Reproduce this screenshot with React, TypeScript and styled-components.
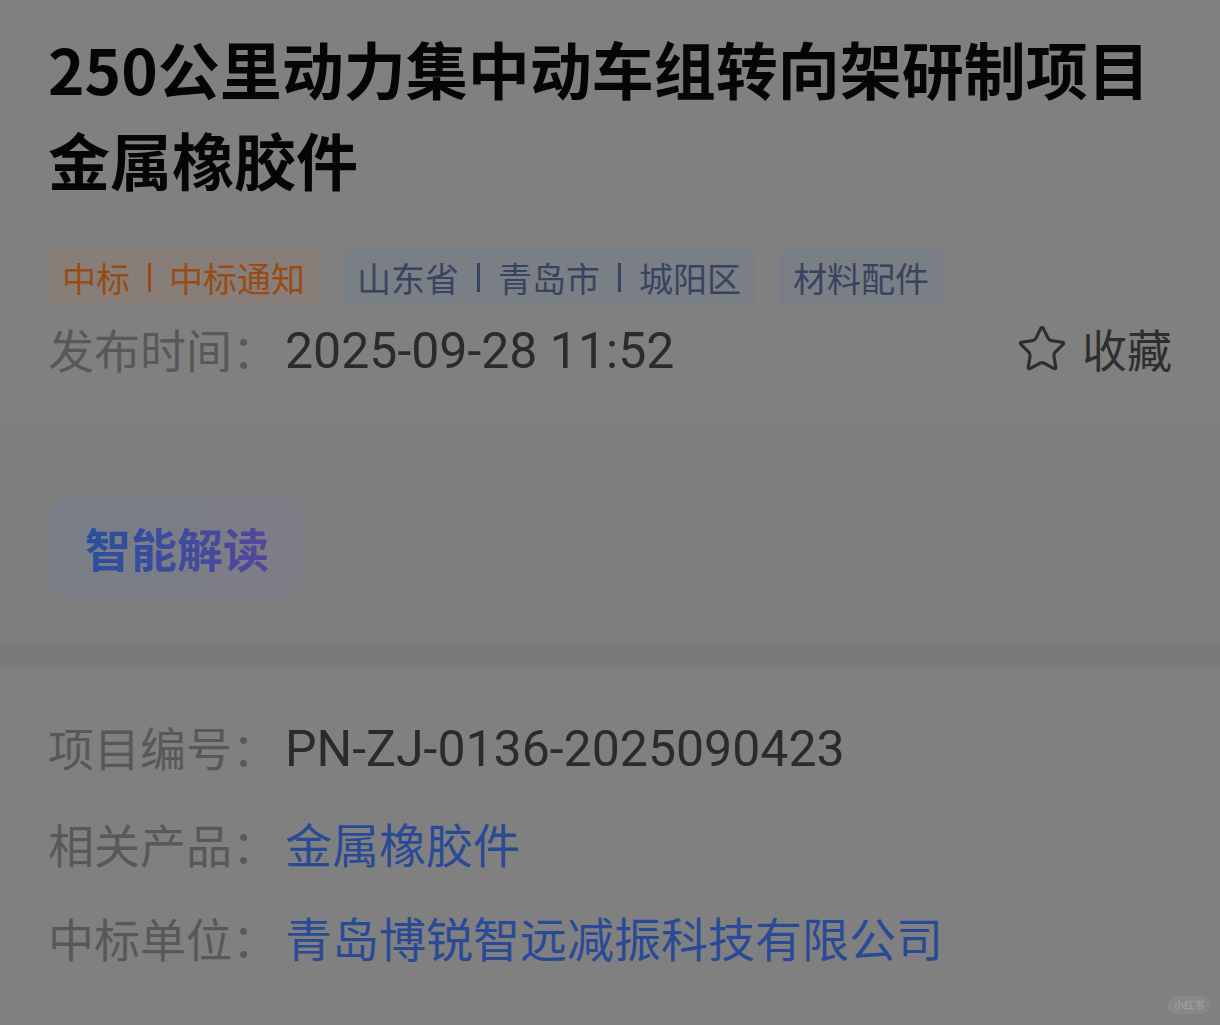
import React from "react";
import styled, { createGlobalStyle } from "styled-components";
import { Star } from "lucide-react";

const GlobalStyle = createGlobalStyle`
  html, body {
    margin: 0;
    padding: 0;
    background: #808080;
  }
  body {
    font-family: "Noto Sans CJK SC", "Noto Sans", sans-serif;
  }
  * { box-sizing: border-box; }
`;

const Page = styled.div`
  position: relative;
  width: 1220px;
  height: 1025px;
  overflow: hidden;
  background: #808080;
  display: flex;
  flex-direction: column;
`;

const Header = styled.section`
  background: #808080;
  padding: 23px 48px 41px;
  display: flex;
  flex-direction: column;
`;

const Title = styled.h1`
  margin: 0;
  font-size: 62px;
  line-height: 91px;
  font-weight: 700;
  color: #050505;
`;

const TagRow = styled.div`
  display: flex;
  gap: 24px;
  margin-top: 44px;
`;

const Tag = styled.div<{ $tone: "orange" | "blue" }>`
  display: flex;
  align-items: center;
  height: 57px;
  padding: 0 14px;
  font-size: 34px;
  line-height: 57px;
  border-radius: 3px;
  background: ${(p) => (p.$tone === "orange" ? "#877e79" : "#7a7e85")};
  color: ${(p) => (p.$tone === "orange" ? "#984b14" : "#38445f")};
`;

const Sep = styled.span`
  display: inline-block;
  width: 3px;
  height: 29px;
  margin: 0 18px;
  background: currentColor;
`;

const MetaRow = styled.div`
  display: flex;
  align-items: center;
  justify-content: space-between;
  height: 70px;
  margin-top: 8px;
`;

const Field = styled.div`
  display: flex;
  align-items: baseline;
  font-size: 46px;
  line-height: 70px;
`;

const Label = styled.span`
  color: #585858;
  margin-right: 7px;
  font-size: 46px;
`;

const Value = styled.span<{ $link?: boolean; $latin?: boolean }>`
  color: ${(p) => (p.$link ? "#2a4a96" : "#2b2b2b")};
  font-family: ${(p) =>
    p.$latin ? `Roboto, "Noto Sans CJK SC", sans-serif` : `"Noto Sans CJK SC", sans-serif`};
  font-size: ${(p) => (p.$latin ? "50px" : "47px")};
`;

const Collect = styled.div`
  display: flex;
  align-items: center;
  gap: 14px;
  font-size: 45px;
  line-height: 70px;
  color: #2e2e2e;
`;

const Band = styled.section`
  background: #7d7d7d;
  padding: 71px 48px 48px;
  display: flex;
`;

const AiButton = styled.div`
  width: 258px;
  height: 102px;
  border-radius: 26px;
  background: linear-gradient(90deg, #797e87, #7e7d86);
  display: flex;
  align-items: center;
  justify-content: center;
`;

const AiText = styled.span`
  font-size: 46px;
  font-weight: 700;
  line-height: 60px;
  background: linear-gradient(90deg, #284f9e, #56469c);
  -webkit-background-clip: text;
  background-clip: text;
  color: transparent;
`;

const Divider = styled.div`
  height: 21px;
  background: #7a7a7a;
`;

const Details = styled.section`
  background: #808080;
  padding: 32px 48px 0;
  display: flex;
  flex-direction: column;
`;

const DetailRow = styled.div`
  display: flex;
  align-items: baseline;
  line-height: 94px;
`;

const Watermark = styled.div`
  position: absolute;
  right: 10px;
  bottom: 11px;
  width: 42px;
  height: 18px;
  border-radius: 9px;
  background: #888888;
  color: #9c9c9c;
  font-size: 10px;
  line-height: 18px;
  text-align: center;
  font-weight: 700;
`;

export default function App() {
  return (
    <>
      <GlobalStyle />
      <Page>
        <Header>
          <Title>250公里动力集中动车组转向架研制项目金属橡胶件</Title>
          <TagRow>
            <Tag $tone="orange">
              中标<Sep />中标通知
            </Tag>
            <Tag $tone="blue">
              山东省<Sep />青岛市<Sep />城阳区
            </Tag>
            <Tag $tone="blue">材料配件</Tag>
          </TagRow>
          <MetaRow>
            <Field>
              <Label>发布时间：</Label>
              <Value $latin>2025-09-28 11:52</Value>
            </Field>
            <Collect>
              <Star size={52} strokeWidth={1.45} color="#2e2e2e" />
              收藏
            </Collect>
          </MetaRow>
        </Header>
        <Band>
          <AiButton>
            <AiText>智能解读</AiText>
          </AiButton>
        </Band>
        <Divider />
        <Details>
          <DetailRow>
            <Label>项目编号：</Label>
            <Value $latin>PN-ZJ-0136-2025090423</Value>
          </DetailRow>
          <DetailRow>
            <Label>相关产品：</Label>
            <Value $link>金属橡胶件</Value>
          </DetailRow>
          <DetailRow>
            <Label>中标单位：</Label>
            <Value $link>青岛博锐智远减振科技有限公司</Value>
          </DetailRow>
        </Details>
        <Watermark>小红书</Watermark>
      </Page>
    </>
  );
}
